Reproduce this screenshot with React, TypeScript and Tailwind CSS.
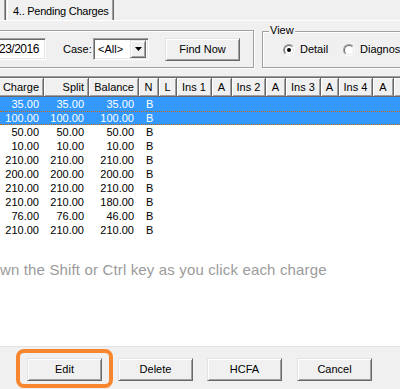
import React from "react";

const raised =
  "bg-[#f0f0f0] border border-t-[#e3e3e3] border-l-[#e3e3e3] border-r-[#696969] border-b-[#696969] shadow-[inset_1px_1px_0_#fff,inset_-1px_-1px_0_#a0a0a0]";
const sunken =
  "bg-white border border-t-[#a0a0a0] border-l-[#a0a0a0] border-r-white border-b-white shadow-[inset_1px_1px_0_#696969,inset_-1px_-1px_0_#e3e3e3]";

function Btn({ children, className = "" }: { children: React.ReactNode; className?: string }) {
  return (
    <div
      className={`w-[75px] h-[23px] shrink-0 flex items-center justify-center text-[11px] leading-[13px] text-black ${raised} ${className}`}
    >
      {children}
    </div>
  );
}

function Radio({ checked }: { checked?: boolean }) {
  return (
    <div className="w-[12px] h-[12px] shrink-0 rounded-full border border-t-[#a0a0a0] border-l-[#a0a0a0] border-r-white border-b-white">
      <div className="w-full h-full rounded-full border border-t-[#696969] border-l-[#696969] border-r-[#e3e3e3] border-b-[#e3e3e3] bg-white flex items-center justify-center">
        {checked && <div className="w-[4px] h-[4px] rounded-full bg-black" />}
      </div>
    </div>
  );
}

const headerCells: { w: string; label: string; right?: boolean }[] = [
  { w: "w-[54px] -ml-[10px]", label: "Charge", right: true },
  { w: "w-[45px]", label: "Split", right: true },
  { w: "w-[50px]", label: "Balance", right: true },
  { w: "w-[20px]", label: "N" },
  { w: "w-[18px]", label: "L" },
  { w: "w-[35px]", label: "Ins 1" },
  { w: "w-[20px]", label: "A" },
  { w: "w-[34px]", label: "Ins 2" },
  { w: "w-[20px]", label: "A" },
  { w: "w-[35px]", label: "Ins 3" },
  { w: "w-[18px]", label: "A" },
  { w: "w-[34px]", label: "Ins 4" },
  { w: "w-[21px]", label: "A" },
  { w: "w-[40px]", label: "" },
];

const rows = [
  ["35.00", "35.00", "35.00", "B"],
  ["100.00", "100.00", "100.00", "B"],
  ["50.00", "50.00", "50.00", "B"],
  ["10.00", "10.00", "10.00", "B"],
  ["210.00", "210.00", "210.00", "B"],
  ["200.00", "200.00", "200.00", "B"],
  ["210.00", "210.00", "210.00", "B"],
  ["210.00", "210.00", "180.00", "B"],
  ["76.00", "76.00", "46.00", "B"],
  ["210.00", "210.00", "210.00", "B"],
];

export default function App() {
  return (
    <div className="w-[400px] h-[389px] overflow-hidden bg-[#f0f0f0] flex flex-col font-['Liberation_Sans',Arial,sans-serif] text-[11px] leading-[13px] text-black">
      {/* tab strip */}
      <div className="h-[20px] shrink-0 flex">
        <div className="w-[4px]" />
        <div className="w-[2px] h-full border-l border-l-[#a0a0a0] border-r border-r-[#696969]" />
        <div className="w-[1px]" />
        <div className="w-[107px] h-full border-l border-l-white border-r border-r-[#696969] shadow-[inset_-1px_0_0_#a0a0a0] pl-[5px] pt-[5px] tracking-[-0.25px] whitespace-nowrap">
          4.. Pending Charges
        </div>
      </div>
      <div className="h-[1px] shrink-0 bg-white" />
      <div className="h-[9px] shrink-0" />

      {/* groups */}
      <div className="h-[39px] shrink-0 flex items-start">
        <div className="-ml-[10px] w-[264px] h-[38px] shrink-0 border border-[#a0a0a0] shadow-[inset_1px_1px_0_#fff,1px_1px_0_#fff] flex items-start pt-[7px]">
          <div className={`w-[55px] h-[22px] shrink-0 ${sunken} flex items-center pl-[7px] text-[12px] tracking-[-0.5px]`}>
            23/2016
          </div>
          <div className="ml-[17px] w-[30px] shrink-0 h-[22px] flex items-center pt-[1px]">Case:</div>
          <div className={`w-[56px] h-[22px] shrink-0 ${sunken} flex items-center p-[2px]`}>
            <div className="flex-1 pl-[2px]">&lt;All&gt;</div>
            <div className={`w-[16px] h-[18px] shrink-0 ${raised} flex items-center justify-center`}>
              <svg width="7" height="4" viewBox="0 0 7 4">
                <path d="M0 0h7L3.5 4z" fill="#000" />
              </svg>
            </div>
          </div>
          <Btn className="ml-[16px]">Find Now</Btn>
        </div>
        <div className="ml-[8px] mt-[1px] w-[150px] h-[37px] shrink-0 relative border border-[#a0a0a0] shadow-[inset_1px_1px_0_#fff,1px_1px_0_#fff] flex items-center pl-[20px]">
          <div className="absolute -top-[8px] left-[6px] px-[1px] bg-[#f0f0f0]">View</div>
          <div className="w-[60px] shrink-0 flex items-center">
            <Radio checked />
            <span className="ml-[5px]">Detail</span>
          </div>
          <div className="shrink-0 flex items-center">
            <Radio />
            <span className="ml-[5px] whitespace-nowrap">Diagnosis</span>
          </div>
        </div>
      </div>
      <div className="h-[7px] shrink-0" />

      {/* list */}
      <div className="h-[271px] shrink-0 flex flex-col">
        <div className="h-[2px] shrink-0 border-t border-t-[#a0a0a0] border-b border-b-[#696969]" />
        <div className="h-[19px] shrink-0 flex bg-[#f0f0f0]">
          {headerCells.map((c, i) => (
            <div
              key={i}
              className={`${c.w} h-full shrink-0 flex items-center ${c.right ? "justify-end pr-[4px]" : "justify-center"} bg-[#f0f0f0] border-r border-b border-[#696969] shadow-[inset_1px_1px_0_#fff,inset_-1px_-1px_0_#a0a0a0] whitespace-nowrap`}
            >
              {c.label}
            </div>
          ))}
        </div>
        <div className="flex-1 bg-white flex flex-col">
          {rows.map((r, i) => {
            const sel = i < 2;
            const focus = i === 1;
            return (
              <div
                key={i}
                className={`h-[14px] shrink-0 flex items-center ${sel ? "bg-[#3399ff] text-white" : "text-black"} ${focus ? "border-y border-dotted border-[#cc6600]" : ""}`}
              >
                <div className="w-[54px] -ml-[10px] shrink-0 text-right pr-[5px]">{r[0]}</div>
                <div className="w-[45px] shrink-0 text-right pr-[5px]">{r[1]}</div>
                <div className="w-[50px] shrink-0 text-right pr-[5px]">{r[2]}</div>
                <div className="w-[20px] shrink-0 pl-[7px]">{r[3]}</div>
              </div>
            );
          })}
          <div className="mt-[24px] text-[15px] leading-[17px] text-[#9b9b9b] whitespace-nowrap tracking-[0.15px]">
            wn the Shift or Ctrl key as you click each charge
          </div>
        </div>
        <div className="h-[1px] shrink-0 bg-[#e3e3e3]" />
      </div>

      {/* buttons */}
      <div className="flex-1 flex items-start pt-[2px] pl-[16px]">
        <div className="shrink-0 border-[4px] border-[#f7862f] rounded-[8px] px-[7px] pt-[5px] pb-[3px]">
          <Btn>Edit</Btn>
        </div>
        <Btn className="ml-[5px] mt-[9px]">Delete</Btn>
        <Btn className="ml-[14px] mt-[9px]">HCFA</Btn>
        <Btn className="ml-[15px] mt-[9px]">Cancel</Btn>
      </div>
    </div>
  );
}
